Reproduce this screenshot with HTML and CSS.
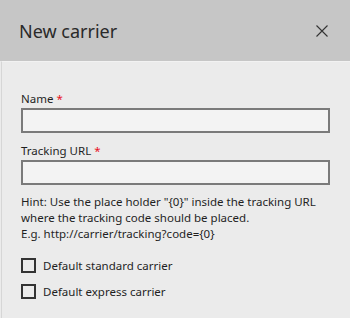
FILE: index.html
```html
<!DOCTYPE html>
<html lang="en">
<head>
    <meta charset="UTF-8">
    <meta name="viewport" content="width=device-width, initial-scale=1.0">
    <title>New carrier</title>
    <link rel="stylesheet" href="styles.css">
</head>
<body>

<div class="dialog">
    <div class="dialog-header">
        <h1>New carrier</h1>
        <button class="close-button" type="button" aria-label="Close">
            <svg width="12" height="12" viewBox="0 0 12 12">
                <path d="M0.5 0.5 L11.5 11.5 M11.5 0.5 L0.5 11.5" stroke="#333" stroke-width="1.1" fill="none"/>
            </svg>
        </button>
    </div>

    <form class="dialog-body">
        <label class="field-label" for="name">Name <span class="required">*</span></label>
        <input class="text-input" type="text" id="name">

        <label class="field-label" for="trackingUrl">Tracking URL <span class="required">*</span></label>
        <input class="text-input" type="text" id="trackingUrl">

        <p class="hint">Hint: Use the place holder "{0}" inside the tracking URL where the tracking code should be placed.<br>E.g. http://carrier/tracking?code={0}</p>

        <label class="check-row"><span class="check-box"></span> Default standard carrier</label>
        <label class="check-row"><span class="check-box"></span> Default express carrier</label>
    </form>
</div>

</body>
</html>
```

FILE: styles.css
```css
body {
    margin: 0;
    font-family: "Noto Sans", "Open Sans", sans-serif;
    color: #1f1f1f;
    background: #ebebeb;
}
.dialog {
    width: 350px;
    height: 318px;
    overflow: hidden;
}
.dialog-header {
    height: 61px;
    background: #c6c6c6;
    display: flex;
    align-items: center;
    justify-content: space-between;
    padding: 0 22px 0 19px;
    box-sizing: border-box;
}
.dialog-header h1 {
    margin: 0;
    font-size: 18px;
    font-weight: 400;
    color: #2a2a2a;
}
.close-button {
    background: none;
    border: none;
    padding: 0;
    width: 12px;
    height: 12px;
    display: flex;
}
.dialog-body {
    margin: 0;
    border-left: 1px solid #d6d6d6;
    margin-left: 1px;
    border-top: 1px solid #f2f2f2;
    padding: 29px 19px 0 19px;
    height: 257px;
    box-sizing: border-box;
}
.field-label {
    display: block;
    font-size: 11.5px;
    line-height: 16px;
    margin-bottom: 1px;
}
.required {
    color: #e81123;
}
.text-input {
    display: block;
    width: 309px;
    height: 25px;
    box-sizing: border-box;
    border: 2px solid #7a7a7a;
    background: #f3f3f3;
    margin: 0 0 10px 0;
    outline: none;
}
.hint {
    font-size: 11.5px;
    line-height: 16px;
    margin: -1px 0 15px 0;
}
.check-row {
    display: flex;
    align-items: center;
    gap: 7px;
    font-size: 11.5px;
    height: 16px;
    margin-bottom: 10px;
}
.check-box {
    width: 15px;
    height: 15px;
    box-sizing: border-box;
    border: 2px solid #333;
}
```
